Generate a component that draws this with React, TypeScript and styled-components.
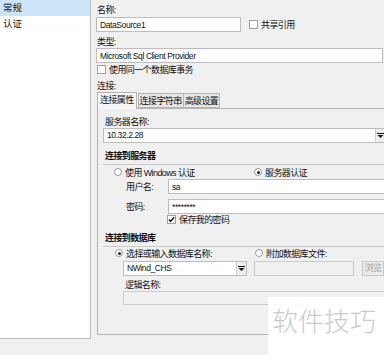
import React from "react";
import styled, { createGlobalStyle } from "styled-components";

const Global = createGlobalStyle`
  html, body { margin: 0; padding: 0; background: #f0f0f0; }
  body { font-family: "Liberation Sans", "Noto Sans CJK SC", sans-serif; font-size: 9px; color: #111; }
  * { box-sizing: border-box; }
`;

const Page = styled.div`
  position: relative;
  width: 384px;
  height: 355px;
  overflow: hidden;
  display: flex;
  background: #f0f0f0;
`;

const SideCol = styled.div`
  width: 91px;
  flex: none;
  height: 355px;
`;

const Sidebar = styled.div`
  height: 339px;
  background: #fff;
  border-right: 1px solid #bcbcbc;
  border-bottom: 1px solid #bcbcbc;
`;

const NavItem = styled.div<{ $active?: boolean }>`
  height: 16px;
  line-height: 16px;
  padding-left: 3px;
  font-size: 9.5px;
  background: ${(p) => (p.$active ? "#cce4f7" : "transparent")};
`;

const Main = styled.div`
  flex: 1;
  padding: 4px 0 0 5px;
  display: flex;
  flex-direction: column;
  min-width: 0;
`;

const Label = styled.div<{ $indent?: number; $mt?: number; $h?: number }>`
  height: ${(p) => p.$h ?? 12}px;
  line-height: ${(p) => p.$h ?? 12}px;
  margin-top: ${(p) => p.$mt ?? 0}px;
  padding-left: ${(p) => p.$indent ?? 0}px;
  letter-spacing: -0.6px;
  white-space: nowrap;
  flex: none;
`;

const Row = styled.div<{ $mt?: number; $pl?: number; $h?: number }>`
  display: flex;
  align-items: center;
  height: ${(p) => p.$h ?? 12}px;
  margin-top: ${(p) => p.$mt ?? 0}px;
  padding-left: ${(p) => p.$pl ?? 0}px;
  white-space: nowrap;
  flex: none;
`;

const Input = styled.div<{ $w: number; $disabled?: boolean; $mt?: number; $ml?: number; $h?: number }>`
  width: ${(p) => p.$w}px;
  height: ${(p) => p.$h ?? 15}px;
  margin-top: ${(p) => p.$mt ?? 0}px;
  margin-left: ${(p) => p.$ml ?? 0}px;
  flex: none;
  border: 1px solid ${(p) => (p.$disabled ? "#cbcbcb" : "#bdbdbd")};
  background: ${(p) => (p.$disabled ? "#f0f0f0" : "#fff")};
  padding-left: 3px;
  font-size: 8.5px;
  letter-spacing: -0.4px;
  white-space: nowrap;
  overflow: hidden;
  display: flex;
  align-items: center;
`;

const Combo = styled.div<{ $w: number; $mt?: number }>`
  width: ${(p) => p.$w}px;
  height: 15px;
  margin-top: ${(p) => p.$mt ?? 0}px;
  flex: none;
  border: 1px solid #bdbdbd;
  background: #fff;
  display: flex;
`;

const ComboText = styled.div`
  flex: 1;
  padding-left: 3px;
  line-height: 13px;
  font-size: 8.5px;
  letter-spacing: -0.4px;
  white-space: nowrap;
`;

const ComboBtn = styled.div`
  width: 10px;
  flex: none;
  border-left: 1px solid #cdcdcd;
  background: #ededed;
  display: flex;
  align-items: center;
  justify-content: center;
`;

const Box = styled.span`
  width: 9px;
  height: 9px;
  border: 1px solid #a0a0a0;
  background: #fff;
  display: inline-flex;
  align-items: center;
  justify-content: center;
  flex: none;
`;

const Radio = styled.span`
  width: 8px;
  height: 8px;
  border: 1px solid #9a9a9a;
  border-radius: 50%;
  background: #fff;
  display: inline-flex;
  align-items: center;
  justify-content: center;
  flex: none;
`;

const Dot = styled.span`
  width: 3px;
  height: 3px;
  border-radius: 50%;
  background: #222;
`;

const Option = styled.div<{ $w?: number }>`
  display: flex;
  align-items: center;
  gap: 3px;
  letter-spacing: -0.6px;
  white-space: nowrap;
  width: ${(p) => (p.$w ? `${p.$w}px` : "auto")};
  flex: none;
`;

const Tabs = styled.div`
  display: flex;
  align-items: flex-end;
  height: 16px;
  margin-left: 1px;
  flex: none;
`;

const Tab = styled.div<{ $active?: boolean }>`
  height: ${(p) => (p.$active ? 17 : 15)}px;
  line-height: 14px;
  padding: 0 ${(p) => (p.$active ? 2 : 1)}px;
  letter-spacing: -0.6px;
  border: 1px solid #b4b4b4;
  border-bottom: ${(p) => (p.$active ? "none" : "1px solid #b4b4b4")};
  background: ${(p) => (p.$active ? "#f5f5f5" : "#e6e6e6")};
  margin-right: ${(p) => (p.$active ? 1 : -1)}px;
  margin-bottom: ${(p) => (p.$active ? -1 : 0)}px;
  position: relative;
  z-index: ${(p) => (p.$active ? 2 : 1)};
  white-space: nowrap;
`;

const Panel = styled.div`
  margin-left: 1px;
  width: 320px;
  height: 227px;
  flex: none;
  border: 1px solid #b4b4b4;
  background: #f0f0f0;
  padding: 8px 0 0 5px;
  display: flex;
  flex-direction: column;
`;

const Section = styled.div<{ $mt: number }>`
  font-weight: bold;
  height: 16px;
  line-height: 14px;
  margin-top: ${(p) => p.$mt}px;
  padding-left: 2px;
  letter-spacing: -0.6px;
  border-bottom: 1px solid #c9c9c9;
  flex: none;
`;

const FieldLabel = styled.div`
  width: 65px;
  padding-left: 23px;
  letter-spacing: -0.6px;
  flex: none;
`;

const Button = styled.div`
  width: 22px;
  height: 15px;
  margin-left: 8px;
  border: 1px solid #c6c6c6;
  background: #ececec;
  color: #a0a0a0;
  line-height: 13px;
  letter-spacing: -0.6px;
  text-align: center;
  flex: none;
`;

const Watermark = styled.div`
  position: absolute;
  left: 268px;
  top: 297px;
  width: 116px;
  height: 58px;
  background: #fff;
  color: #cacaca;
  font-family: "Noto Sans CJK SC", sans-serif;
  font-size: 26px;
  line-height: 26px;
  font-weight: 300;
  padding: 10px 0 0 4px;
  white-space: nowrap;
`;

const Arrow = () => (
  <svg width="7" height="5" viewBox="0 0 7 5">
    <rect x="0" y="0" width="7" height="1" fill="#111" />
    <path d="M0.5 2 L6.5 2 L3.5 5 Z" fill="#111" />
  </svg>
);

const Check = () => (
  <svg width="7" height="7" viewBox="0 0 8 8">
    <path d="M1 4 L3 6.2 L7 1.5" stroke="#111" strokeWidth="1.6" fill="none" />
  </svg>
);

export default function App() {
  return (
    <Page>
      <Global />
      <SideCol>
        <Sidebar>
          <NavItem $active>常规</NavItem>
          <NavItem>认证</NavItem>
        </Sidebar>
      </SideCol>
      <Main>
        <Label $indent={1} $h={13}>名称:</Label>
        <Row $h={15}>
          <Input $w={145}>DataSource1</Input>
          <Option style={{ marginLeft: 8 }}>
            <Box />
            共享引用
          </Option>
        </Row>
        <Label $indent={1} $mt={4}>类型:</Label>
        <Input $w={287}>Microsoft Sql Client Provider</Input>
        <Row $pl={1}>
          <Option>
            <Box />
            使用同一个数据库事务
          </Option>
        </Row>
        <Label $indent={1} $mt={5}>连接:</Label>
        <Tabs>
          <Tab $active>连接属性</Tab>
          <Tab>连接字符串</Tab>
          <Tab>高级设置</Tab>
        </Tabs>
        <Panel>
          <Label $indent={2} $h={11}>服务器名称:</Label>
          <Combo $w={283}>
            <ComboText>10.32.2.28</ComboText>
            <ComboBtn>
              <Arrow />
            </ComboBtn>
          </Combo>
          <Section $mt={6}>连接到服务器</Section>
          <Row $mt={1} $pl={11}>
            <Option $w={140}>
              <Radio />
              使用 Windows 认证
            </Option>
            <Option>
              <Radio>
                <Dot />
              </Radio>
              服务器认证
            </Option>
          </Row>
          <Row $mt={1} $h={15}>
            <FieldLabel>用户名:</FieldLabel>
            <Input $w={220}>sa</Input>
          </Row>
          <Row $mt={5} $h={15}>
            <FieldLabel>密码:</FieldLabel>
            <Input $w={220}>********</Input>
          </Row>
          <Row $pl={64} $h={11}>
            <Option>
              <Box>
                <Check />
              </Box>
              保存我的密码
            </Option>
          </Row>
          <Section $mt={6}>连接到数据库</Section>
          <Row $pl={12}>
            <Option $w={140}>
              <Radio>
                <Dot />
              </Radio>
              选择或输入数据库名称:
            </Option>
            <Option>
              <Radio />
              附加数据库文件:
            </Option>
          </Row>
          <Row $mt={2} $pl={20} $h={15}>
            <Combo $w={124}>
              <ComboText>NWind_CHS</ComboText>
              <ComboBtn>
                <Arrow />
              </ComboBtn>
            </Combo>
            <Input $w={100} $disabled $ml={7} />
            <Button>浏览</Button>
          </Row>
          <Label $indent={22} $mt={3}>逻辑名称:</Label>
          <Input $w={270} $disabled $ml={20} $h={14} />
        </Panel>
      </Main>
      <Watermark>软件技巧</Watermark>
    </Page>
  );
}
